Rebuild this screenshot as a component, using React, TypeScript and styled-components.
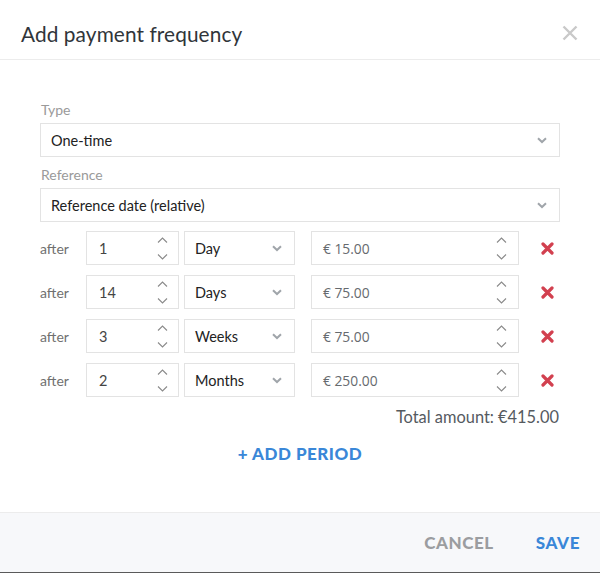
import React from "react";
import styled, { createGlobalStyle } from "styled-components";

const Global = createGlobalStyle`
  html, body { margin: 0; padding: 0; background: #fff; }
  body { font-family: Lato, "Open Sans", sans-serif; }
  * { box-sizing: border-box; }
`;

const Modal = styled.div`
  width: 600px;
  height: 573px;
  display: flex;
  flex-direction: column;
  background: #fff;
  border-bottom: 1px solid #5a5a5a;
`;

const Header = styled.div`
  height: 60px;
  flex: none;
  display: flex;
  align-items: center;
  justify-content: space-between;
  padding: 7px 22px 0 21px;
  border-bottom: 1px solid #ececec;
`;

const Title = styled.h1`
  margin: 0;
  font-size: 20.8px;
  font-weight: 400;
  color: #30353a;
  letter-spacing: 0.1px;
`;

const CloseBtn = styled.button`
  border: 0;
  background: none;
  padding: 0;
  width: 16px;
  height: 16px;
  display: flex;
  cursor: pointer;
`;

const Body = styled.div`
  flex: 1;
  padding: 41px 40px 0 40px;
  display: flex;
  flex-direction: column;
`;

const Field = styled.div`
  display: flex;
  flex-direction: column;
  margin-bottom: 9px;
`;

const Label = styled.label`
  font-size: 14px;
  line-height: 18px;
  color: #9a9a9a;
  margin-bottom: 4px;
  padding-left: 1px;
`;

const Box = styled.div<{ $w?: number }>`
  height: 34px;
  flex: none;
  border: 1px solid #e3e3e3;
  background: #fff;
  display: flex;
  align-items: center;
  ${(p) => (p.$w ? `width: ${p.$w}px;` : "")}
`;

const SelectBox = styled(Box)`
  padding: 0 12px 0 10px;
  justify-content: space-between;
`;

const SelectText = styled.span`
  font-size: 14.5px;
  color: #222;
`;

const Rows = styled.div`
  display: flex;
  flex-direction: column;
  gap: 10px;
`;

const Row = styled.div`
  display: flex;
  align-items: center;
`;

const After = styled.span`
  width: 46px;
  flex: none;
  font-size: 14px;
  color: #707070;
`;

const NumberBox = styled(Box)`
  padding: 0 10px 0 12px;
  justify-content: space-between;
  margin-right: 5px;
`;

const NumText = styled.span`
  font-size: 14.5px;
  color: #444;
`;

const UnitBox = styled(SelectBox)`
  margin-right: 16px;
`;

const AmountBox = styled(Box)`
  padding: 0 11px 0 11px;
  justify-content: space-between;
`;

const AmountText = styled.span`
  font-family: "Open Sans", Lato, sans-serif;
  font-size: 13.8px;
  color: #666a6e;
`;

const Spinner = styled.div`
  display: flex;
  flex-direction: column;
  gap: 11px;
  align-items: center;
  padding-top: 1px;
`;

const DeleteBtn = styled.button`
  border: 0;
  background: none;
  padding: 0;
  margin-left: 22px;
  width: 13px;
  height: 13px;
  display: flex;
  cursor: pointer;
`;

const Total = styled.div`
  margin-top: 10px;
  padding-right: 1px;
  text-align: right;
  font-size: 16.4px;
  line-height: 20px;
  color: #555a5f;
`;

const AddPeriod = styled.button`
  margin-top: 17px;
  align-self: center;
  border: 0;
  background: none;
  padding: 0;
  font-family: Lato, sans-serif;
  font-weight: 900;
  font-size: 17px;
  line-height: 20px;
  color: #3a87d8;
  letter-spacing: 0.5px;
  cursor: pointer;
`;

const Footer = styled.div`
  height: 60px;
  flex: none;
  background: #f7f8fa;
  border-top: 1px solid #ececec;
  display: flex;
  align-items: center;
  justify-content: flex-end;
  padding: 0 20px 0 0;
  gap: 42px;
`;

const FooterBtn = styled.button<{ $primary?: boolean }>`
  border: 0;
  background: none;
  padding: 0;
  font-family: Lato, sans-serif;
  font-weight: 900;
  font-size: 17px;
  letter-spacing: 0.6px;
  color: ${(p) => (p.$primary ? "#3a87d8" : "#9b9da0")};
  cursor: pointer;
`;

const Chevron = () => (
  <svg width="10" height="7" viewBox="0 0 10 7">
    <path d="M1 1.2 L5 5 L9 1.2" fill="none" stroke="#a0a5aa" strokeWidth="2" />
  </svg>
);

const Arrows = () => (
  <Spinner>
    <svg width="11" height="6" viewBox="0 0 11 6">
      <path d="M1 5.5 L5.5 1 L10 5.5" fill="none" stroke="#8a8a8a" strokeWidth="1.1" />
    </svg>
    <svg width="11" height="6" viewBox="0 0 11 6">
      <path d="M1 0.5 L5.5 5 L10 0.5" fill="none" stroke="#8a8a8a" strokeWidth="1.1" />
    </svg>
  </Spinner>
);

const rows = [
  { n: "1", unit: "Day", amount: "€ 15.00" },
  { n: "14", unit: "Days", amount: "€ 75.00" },
  { n: "3", unit: "Weeks", amount: "€ 75.00" },
  { n: "2", unit: "Months", amount: "€ 250.00" },
];

export default function App() {
  return (
    <>
      <Global />
      <Modal>
        <Header>
          <Title>Add payment frequency</Title>
          <CloseBtn aria-label="Close">
            <svg width="16" height="16" viewBox="0 0 16 16">
              <path d="M1.5 1.5 L14.5 14.5 M14.5 1.5 L1.5 14.5" stroke="#c9c9c9" strokeWidth="2.4" />
            </svg>
          </CloseBtn>
        </Header>
        <Body>
          <Field>
            <Label>Type</Label>
            <SelectBox>
              <SelectText>One-time</SelectText>
              <Chevron />
            </SelectBox>
          </Field>
          <Field>
            <Label>Reference</Label>
            <SelectBox>
              <SelectText>Reference date (relative)</SelectText>
              <Chevron />
            </SelectBox>
          </Field>
          <Rows>
            {rows.map((r, i) => (
              <Row key={i}>
                <After>after</After>
                <NumberBox $w={93}>
                  <NumText>{r.n}</NumText>
                  <Arrows />
                </NumberBox>
                <UnitBox $w={111}>
                  <SelectText>{r.unit}</SelectText>
                  <Chevron />
                </UnitBox>
                <AmountBox $w={208}>
                  <AmountText>{r.amount}</AmountText>
                  <Arrows />
                </AmountBox>
                <DeleteBtn aria-label="Remove">
                  <svg width="13" height="13" viewBox="0 0 13 13">
                    <path d="M2 2 L11 11 M11 2 L2 11" stroke="#d2404f" strokeWidth="3.2" strokeLinecap="round" />
                  </svg>
                </DeleteBtn>
              </Row>
            ))}
          </Rows>
          <Total>Total amount: €415.00</Total>
          <AddPeriod>+ ADD PERIOD</AddPeriod>
        </Body>
        <Footer>
          <FooterBtn>CANCEL</FooterBtn>
          <FooterBtn $primary>SAVE</FooterBtn>
        </Footer>
      </Modal>
    </>
  );
}
